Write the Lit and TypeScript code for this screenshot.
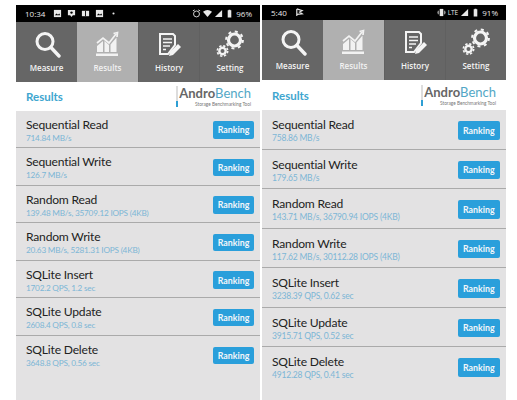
import { LitElement, html, css, svg } from "lit";
import { customElement, property } from "lit/decorators.js";

type Row = [string, string];

const tabIcons = {
  measure: svg`<circle cx="12" cy="11.5" r="8" fill="none" stroke="currentColor" stroke-width="3"/><path d="M18 17.5l8 8.5" stroke="currentColor" stroke-width="3.4" stroke-linecap="round"/>`,
  results: svg`<path d="M3 13l6-5 6 5 7-9M19.5 3.5l4-1-.5 4.5" fill="none" stroke="currentColor" stroke-width="1.7"/><path d="M3 16l6-5v11H3zM10.500 11l4.500 4v7h-4.500zM16.500 14.500l6-7V22h-6zM2 23.500h22v2.500H2z" fill="currentColor"/>`,
  history: svg`<path d="M5 4h13l2 2v9l-7 9H5z" fill="none" stroke="currentColor" stroke-width="2"/><path d="M8 9h9M8 12.500h9M8 16h7M8 19.500h3" stroke="currentColor" stroke-width="1.6"/><path d="M14 26l1-4 8-8 3 3-8 8z" fill="currentColor"/>`,
  setting: svg`<circle cx="18.500" cy="10" r="6" fill="none" stroke="currentColor" stroke-width="3.200"/><circle cx="18.500" cy="10" r="8.400" fill="none" stroke="currentColor" stroke-width="2" stroke-dasharray="3 3.600"/><circle cx="6.500" cy="21" r="3.200" fill="none" stroke="currentColor" stroke-width="2.400"/><circle cx="6.500" cy="21" r="5.200" fill="none" stroke="currentColor" stroke-width="1.600" stroke-dasharray="2.300 1.800"/>`,
};

const glyphs = {
  image: svg`<path d="M1 1h8v8H1z" fill="currentColor"/><path d="M2 7l2-2 1.500 1.500L7 5l1 2z" fill="#000"/>`,
  pin: svg`<path d="M1 1h8v6H6.500L5 9 3.500 7H1z" fill="currentColor"/><circle cx="5" cy="4" r="1.300" fill="#000"/>`,
  tape: svg`<path d="M1 2h8v6H1z" fill="currentColor"/><path d="M5 2v6" stroke="#000"/>`,
  dot: svg`<circle cx="5" cy="5" r="1.200" fill="currentColor"/>`,
  alarm: svg`<circle cx="5" cy="5.500" r="3.300" fill="none" stroke="currentColor"/><path d="M1 2l2-1M9 2L7 1" stroke="currentColor"/>`,
  wifi: svg`<path d="M0 3q5-4 10 0L5 9z" fill="currentColor"/>`,
  signal: svg`<path d="M9 1v8H1z" fill="currentColor"/>`,
  battery: svg`<path d="M3 1.500h1V.8h2v.7h1v8H3z" fill="currentColor"/>`,
  vibrate: svg`<path d="M3 1h4v8H3z" fill="currentColor"/><path d="M1.500 3v4M0 4v2M8.500 3v4M10 4v2" stroke="currentColor" stroke-width=".8"/>`,
  flag: svg`<path d="M2 1v8M2 1l6 2-3 1.500 3 2L2 7" fill="none" stroke="currentColor" stroke-width="1.300"/>`,
};

@customElement("phone-panel")
class PhonePanel extends LitElement {
  @property({ type: String }) time = "";
  @property({ type: String }) battery = "";
  @property({ type: Array }) rows: Row[] = [];
  @property({ type: Array }) leftGlyphs: (keyof typeof glyphs)[] = [];
  @property({ type: Array }) rightGlyphs: (keyof typeof glyphs | "LTE")[] = [];
  @property({ type: Boolean, reflect: true }) tall = false;

  static styles = css`
    :host {
      display: flex;
      flex-direction: column;
      width: 244px;
      height: 395px;
      font-family: "Lato", "Open Sans", sans-serif;
      --status-h: 17px;
      --head-h: 28.5px;
      --row-h: 37.6px;
      --btn-w: 41px;
      --btn-h: 17.5px;
      --btn-top: 4.500px;
      --btn-right: 6px;
      --sub-size: 8.200px;
      --row-pad: 6px;
      --logo-right: 9px;
    }
    :host([tall]) {
      --status-h: 15px;
      --head-h: 30px;
      --row-h: 39.5px;
      --btn-w: 42.500px;
      --btn-h: 18.500px;
      --btn-top: 4px;
      --sub-size: 8.500px;
      --row-pad: 7px;
      --logo-right: 10px;
    }
    .status {
      height: var(--status-h);
      background: #000;
      color: #e8e8e8;
      display: flex;
      align-items: center;
      padding: 0 8px 0 9px;
      font-size: 8px;
      font-family: "Open Sans", sans-serif;
      flex: none;
    }
    .status-left, .status-right { display: flex; align-items: center; gap: 5px; }
    .status-right { margin-left: auto; gap: 2px; }
    .time { margin-right: 3px; }
    .lte { font-size: 6.500px; }
    .glyph { width: 9px; height: 9px; }
    .nav {
      display: grid;
      grid-template-columns: repeat(4, 1fr);
      height: 60px;
      background: #666;
      flex: none;
    }
    .tab {
      display: flex;
      flex-direction: column;
      align-items: center;
      gap: 4px;
      padding-top: 8px;
      color: #f4f4f4;
      font-family: "Open Sans", sans-serif;
      font-weight: 600;
      font-size: 8px;
      line-height: 12px;
      border-left: 1px solid #606060;
    }
    .tab:first-child { border-left: none; }
    .tab.active { background: #b0b0b0; border-left: none; color: #f2f2f2; }
    .tab svg { width: 28px; height: 28px; }
    .head {
      height: var(--head-h);
      background: #fff;
      display: flex;
      align-items: center;
      justify-content: space-between;
      padding: 0 var(--logo-right) 0 10px;
      flex: none;
    }
    .head-title { color: #3ea6cf; font-size: 11.500px; font-weight: 700; }
    .logo { display: flex; gap: 1px; align-items: stretch; height: 21px; }
    .logo-bar {
      width: 2px;
      background: linear-gradient(#ddd 0 70%, #2e9fd4 70%);
    }
    .logo-text { display: flex; flex-direction: column; align-items: flex-end; }
    .logo-name { font-size: 13px; line-height: 15px; color: #666; font-weight: 700; }
    .logo-name span { color: #52a7c6; font-weight: 400; }
    .logo-tag { font-size: 4.700px; line-height: 6px; color: #777; }
    .list {
      flex: 1;
      background: #e3e2e3;
      display: grid;
      grid-auto-rows: var(--row-h);
      align-content: start;
    }
    .row {
      display: flex;
      align-items: flex-start;
      justify-content: space-between;
      padding: var(--row-pad) var(--btn-right) 0 10px;
      box-sizing: border-box;
      border-bottom: 1px solid #aaa;
    }
    .row:last-child { border-bottom: none; }
    .name { font-size: 12.100px; line-height: 16px; color: #222; letter-spacing: -0.2px; }
    .sub { font-size: var(--sub-size); line-height: 10px; color: #7cb6d6; letter-spacing: -0.2px; }
    .btn {
      width: var(--btn-w);
      height: var(--btn-h);
      margin-top: var(--btn-top);
      background: #2a9fdb;
      color: #f2f6f9;
      border-radius: 2px;
      font-size: 8.800px;
      font-weight: 700;
      display: flex;
      align-items: center;
      justify-content: center;
    }
  `;

  private glyph(n: keyof typeof glyphs | "LTE") {
    if (n === "LTE") return html`<span class="lte">LTE</span>`;
    return html`<svg class="glyph" viewBox="0 0 10 10">${glyphs[n]}</svg>`;
  }

  render() {
    const tabs: [string, keyof typeof tabIcons][] = [
      ["Measure", "measure"],
      ["Results", "results"],
      ["History", "history"],
      ["Setting", "setting"],
    ];
    return html`
      <div class="status">
        <div class="status-left">
          <span class="time">${this.time}</span>
          ${this.leftGlyphs.map((g) => this.glyph(g))}
        </div>
        <div class="status-right">
          ${this.rightGlyphs.map((g) => this.glyph(g))}
          <span>${this.battery}</span>
        </div>
      </div>
      <div class="nav">
        ${tabs.map(
          ([label, icon]) => html`
            <div class="tab ${label === "Results" ? "active" : ""}">
              <svg viewBox="0 0 28 28">${tabIcons[icon]}</svg>
              <span>${label}</span>
            </div>
          `
        )}
      </div>
      <div class="head">
        <span class="head-title">Results</span>
        <div class="logo">
          <div class="logo-bar"></div>
          <div class="logo-text">
            <div class="logo-name">Andro<span>Bench</span></div>
            <div class="logo-tag">Storage Benchmarking Tool</div>
          </div>
        </div>
      </div>
      <div class="list">
        ${this.rows.map(
          ([name, sub]) => html`
            <div class="row">
              <div>
                <div class="name">${name}</div>
                <div class="sub">${sub}</div>
              </div>
              <div class="btn">Ranking</div>
            </div>
          `
        )}
      </div>
    `;
  }
}

const leftRows: Row[] = [
  ["Sequential Read", "714.84 MB/s"],
  ["Sequential Write", "126.7 MB/s"],
  ["Random Read", "139.48 MB/s, 35709.12 IOPS (4KB)"],
  ["Random Write", "20.63 MB/s, 5281.31 IOPS (4KB)"],
  ["SQLite Insert", "1702.2 QPS, 1.2 sec"],
  ["SQLite Update", "2608.4 QPS, 0.8 sec"],
  ["SQLite Delete", "3648.8 QPS, 0.56 sec"],
];
const rightRows: Row[] = [
  ["Sequential Read", "758.86 MB/s"],
  ["Sequential Write", "179.65 MB/s"],
  ["Random Read", "143.71 MB/s, 36790.94 IOPS (4KB)"],
  ["Random Write", "117.62 MB/s, 30112.28 IOPS (4KB)"],
  ["SQLite Insert", "3238.39 QPS, 0.62 sec"],
  ["SQLite Update", "3915.71 QPS, 0.52 sec"],
  ["SQLite Delete", "4912.28 QPS, 0.41 sec"],
];

@customElement("app-root")
export class AppRoot extends LitElement {
  static styles = css`
    :host {
      display: flex;
      gap: 2px;
      height: 400px;
      box-sizing: border-box;
      padding: 5px 0 0 16px;
      background: #fff;
      overflow: hidden;
    }
  `;
  render() {
    return html`
      <phone-panel
        time="10:34"
        battery="96%"
        .rows=${leftRows}
        .leftGlyphs=${["image", "pin", "tape", "image", "dot"]}
        .rightGlyphs=${["alarm", "wifi", "signal", "battery"]}
      ></phone-panel>
      <phone-panel
        tall
        time="5:40"
        battery="91%"
        .rows=${rightRows}
        .leftGlyphs=${["flag"]}
        .rightGlyphs=${["vibrate", "LTE", "signal", "battery"]}
      ></phone-panel>
    `;
  }
}
